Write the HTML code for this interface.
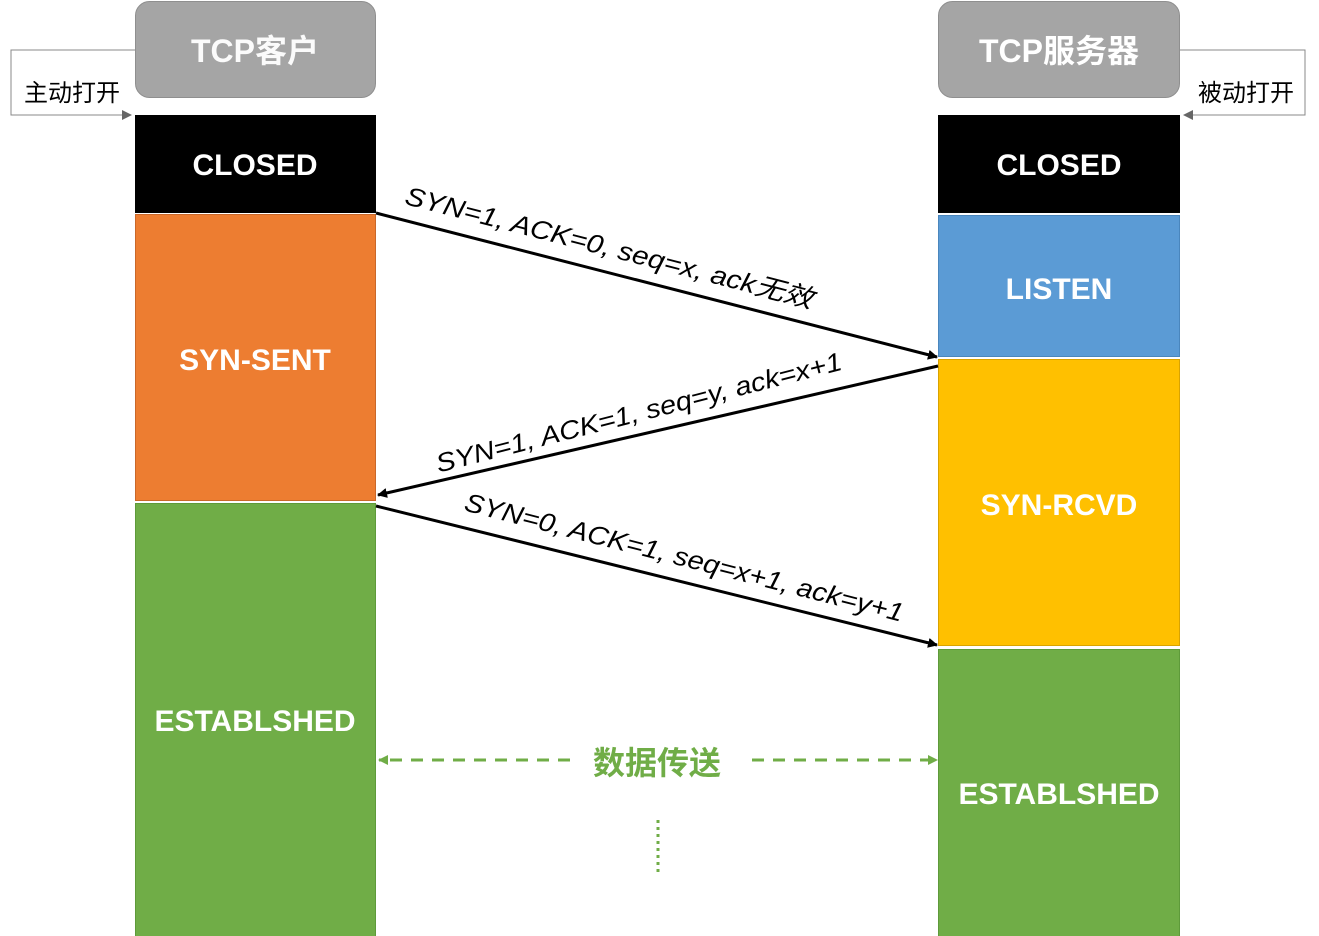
<!DOCTYPE html>
<html><head><meta charset="utf-8"><style>
html,body{margin:0;padding:0;background:#fff;}
svg{display:block}
.w{font-family:"Liberation Sans","Noto Sans CJK SC",sans-serif;font-weight:bold;fill:#fff;text-anchor:middle}
.l{font-family:"Liberation Sans","Noto Sans CJK SC",sans-serif;font-style:italic;fill:#000;text-anchor:middle}
</style></head><body>
<svg width="1319" height="936" viewBox="0 0 1319 936">
<defs>
<marker id="ab" markerWidth="10" markerHeight="10" refX="9" refY="5" orient="auto" markerUnits="userSpaceOnUse" viewBox="0 0 10 10"><path d="M0,0 L10,5 L0,10z" fill="#000"/></marker>
<marker id="ag" markerWidth="10" markerHeight="10" refX="9" refY="5" orient="auto" markerUnits="userSpaceOnUse" viewBox="0 0 10 10"><path d="M0,0 L10,5 L0,10z" fill="#70ad47"/></marker>
<marker id="ay" markerWidth="10" markerHeight="10" refX="9" refY="5" orient="auto" markerUnits="userSpaceOnUse" viewBox="0 0 10 10"><path d="M0,0 L10,5 L0,10z" fill="#666"/></marker>
</defs>
<!-- brackets -->
<polyline points="135,50 11,50 11,115 131,115" fill="none" stroke="#888" stroke-width="1" marker-end="url(#ay)"/>
<polyline points="1180,50 1305,50 1305,115 1184,115" fill="none" stroke="#888" stroke-width="1" marker-end="url(#ay)"/>
<text x="72" y="101" font-family="Liberation Sans,Noto Sans CJK SC,sans-serif" font-size="24" text-anchor="middle">主动打开</text>
<text x="1246" y="101" font-family="Liberation Sans,Noto Sans CJK SC,sans-serif" font-size="24" text-anchor="middle">被动打开</text>
<!-- left column -->
<rect x="135.5" y="1.5" width="240" height="96" rx="14" fill="#a5a5a5" stroke="#8f8f8f"/>
<text class="w" x="255" y="62" font-size="32" fill-opacity="0.95">TCP客户</text>
<rect x="135" y="115" width="241" height="98" fill="#000"/>
<text class="w" x="255" y="175" font-size="30">CLOSED</text>
<rect x="135.5" y="214.5" width="240" height="286" fill="#ed7d31" stroke="#c9682a"/>
<text class="w" x="255" y="370" font-size="30">SYN-SENT</text>
<rect x="135.5" y="503.5" width="240" height="433" fill="#70ad47" stroke="#5e9a3a"/>
<text class="w" x="255" y="731" font-size="30">ESTABLSHED</text>
<!-- right column -->
<rect x="938.5" y="1.5" width="241" height="96" rx="14" fill="#a5a5a5" stroke="#8f8f8f"/>
<text class="w" x="1059" y="62" font-size="32">TCP服务器</text>
<rect x="938" y="115" width="242" height="98" fill="#000"/>
<text class="w" x="1059" y="175" font-size="30">CLOSED</text>
<rect x="938.5" y="215.5" width="241" height="141" fill="#5b9bd5" stroke="#4a86bd"/>
<text class="w" x="1059" y="299" font-size="30">LISTEN</text>
<rect x="938.5" y="359.5" width="241" height="286" fill="#ffc000" stroke="#d9a300"/>
<text class="w" x="1059" y="515" font-size="30">SYN-RCVD</text>
<rect x="938.5" y="649.5" width="241" height="287" fill="#70ad47" stroke="#5e9a3a"/>
<text class="w" x="1059" y="804" font-size="30">ESTABLSHED</text>
<!-- arrows -->
<line x1="376" y1="213" x2="937" y2="357" stroke="#000" stroke-width="3" marker-end="url(#ab)"/>
<line x1="938" y1="366" x2="378" y2="495" stroke="#000" stroke-width="3" marker-end="url(#ab)"/>
<line x1="376" y1="506" x2="937" y2="645" stroke="#000" stroke-width="3" marker-end="url(#ab)"/>
<text class="l" font-size="26" transform="translate(607,256) rotate(14.4)" textLength="420" lengthAdjust="spacingAndGlyphs">SYN=1, ACK=0, seq=x, ack无效</text>
<text class="l" font-size="26" transform="translate(641,421) rotate(-14.3)" textLength="418" lengthAdjust="spacingAndGlyphs">SYN=1, ACK=1, seq=y, ack=x+1</text>
<text class="l" font-size="26" transform="translate(682,566) rotate(14.3)" textLength="452" lengthAdjust="spacingAndGlyphs">SYN=0, ACK=1, seq=x+1, ack=y+1</text>
<!-- data transfer -->
<line x1="570" y1="760" x2="379" y2="760" stroke="#70ad47" stroke-width="3" stroke-dasharray="12,9" marker-end="url(#ag)"/>
<line x1="752" y1="760" x2="937" y2="760" stroke="#70ad47" stroke-width="3" stroke-dasharray="12,9" marker-end="url(#ag)"/>
<text x="657" y="774" font-family="Liberation Sans,Noto Sans CJK SC,sans-serif" font-size="32" font-weight="bold" fill="#70ad47" text-anchor="middle">数据传送</text>
<line x1="658" y1="820" x2="658" y2="874" stroke="#70ad47" stroke-width="3" stroke-dasharray="3,4"/>
</svg>
</body></html>
